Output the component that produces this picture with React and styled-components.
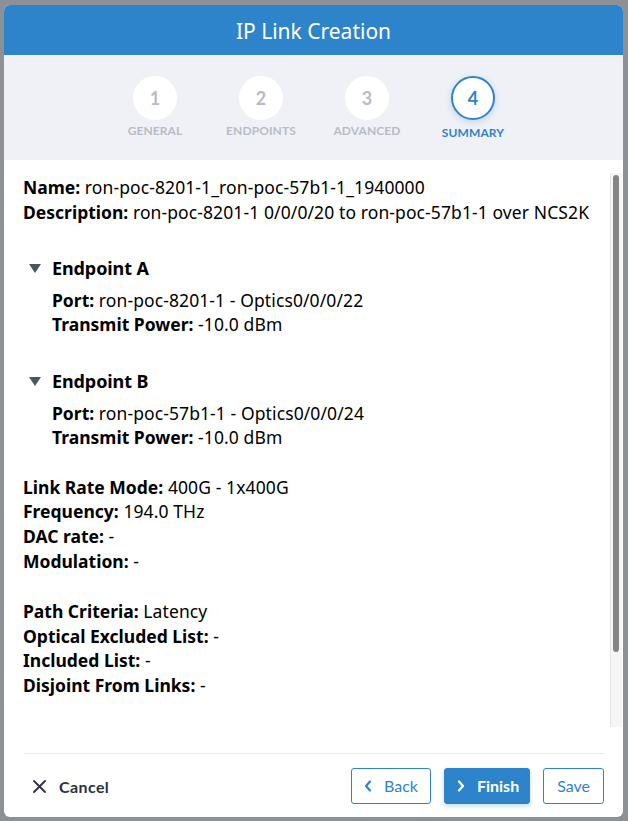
import React from "react";
import styled, { createGlobalStyle } from "styled-components";

const GlobalStyle = createGlobalStyle`
  html, body {
    margin: 0;
    padding: 0;
    background: #8d9095;
  }
  body {
    font-family: "Lato", "Open Sans", sans-serif;
  }
`;

const Page = styled.div`
  padding: 5px 5px 4px 4px;
  height: 821px;
  box-sizing: border-box;
`;

const Modal = styled.div`
  height: 100%;
  background: #ffffff;
  border-radius: 6px;
  overflow: hidden;
  display: flex;
  flex-direction: column;
`;

const Header = styled.div`
  height: 50px;
  background: #2e84cb;
  color: #ffffff;
  display: flex;
  align-items: center;
  justify-content: center;
  font-family: "Noto Sans", sans-serif;
  font-size: 21px;
  padding-top: 1px;
  box-sizing: border-box;
  flex-shrink: 0;
`;

const Stepper = styled.div`
  height: 105px;
  background: #eff1f6;
  display: flex;
  justify-content: center;
  padding-top: 21px;
  box-sizing: border-box;
  flex-shrink: 0;
  padding-left: 1px;
`;

const Step = styled.div`
  width: 106px;
  display: flex;
  flex-direction: column;
  align-items: center;
`;

const Circle = styled.div`
  width: 44px;
  height: 44px;
  border-radius: 50%;
  background: #ffffff;
  box-sizing: border-box;
  border: 2px solid ${(p) => (p.$active ? "#2e84cb" : "#ffffff")};
  box-shadow: ${(p) => (p.$active ? "0 2px 6px rgba(46,132,203,0.25)" : "none")};
  display: flex;
  align-items: center;
  justify-content: center;
  font-size: 18px;
  font-weight: 700;
  color: ${(p) => (p.$active ? "#2e84cb" : "#b9bcc7")};
`;

const StepLabel = styled.div`
  margin-top: ${(p) => (p.$active ? "5px" : "3px")};
  font-size: 12px;
  font-weight: 700;
  color: ${(p) => (p.$active ? "#2e84cb" : "#b9bcc7")};
  letter-spacing: 0.1px;
`;

const Body = styled.div`
  flex: 1;
  margin-top: 13px;
  min-height: 0;
  display: flex;
`;

const ScrollArea = styled.div`
  flex: 1;
  overflow: hidden;
  padding: 2px 0 0 19px;
  color: #000000;
  font-family: "Noto Sans", sans-serif;
  font-size: 17.5px;
  line-height: 24.6px;
  letter-spacing: 0.1px;
`;

const ScrollTrack = styled.div`
  width: 12px;
  background: #f6f6f6;
  border-left: 1px solid #e4e4e4;
  padding: 2px 3px 0 2px;
  box-sizing: border-box;
  margin-right: 1px;
`;

const ScrollThumb = styled.div`
  height: 477px;
  border-radius: 4px;
  background: #858585;
`;

const Line = styled.div`
  white-space: nowrap;
`;

const Key = styled.b`
  font-weight: 700;
  letter-spacing: 0;
`;

const Group = styled.div`
  margin-top: ${(p) => p.$gap || 0}px;
`;

const Section = styled.div`
  margin-top: 32px;
`;

const SectionTitle = styled.div`
  display: flex;
  align-items: center;
  font-size: 18px;
  font-weight: 700;
  letter-spacing: -0.1px;
  padding-left: 6px;
`;

const Caret = styled.span`
  width: 0;
  height: 0;
  border-left: 6px solid transparent;
  border-right: 6px solid transparent;
  border-top: 9px solid #4e5562;
  margin-right: 11px;
`;

const SectionBody = styled.div`
  padding-left: 29px;
  margin-top: 7px;
`;

const Footer = styled.div`
  margin: 26px 19px 0 20px;
  border-top: 1px solid #e8eaee;
  height: 63px;
  display: flex;
  align-items: center;
  flex-shrink: 0;
`;

const CancelButton = styled.button`
  background: none;
  border: none;
  display: flex;
  align-items: center;
  gap: 13px;
  font-family: inherit;
  font-size: 16px;
  font-weight: 700;
  color: #2b3240;
  padding: 0 0 0 9px;
  cursor: pointer;
  margin-top: 2px;
  letter-spacing: 0.4px;
`;

const Actions = styled.div`
  margin-left: auto;
  display: flex;
  gap: 13px;
`;

const Button = styled.button`
  height: 36px;
  box-sizing: border-box;
  border-radius: 3px;
  border: 1px solid #2e84cb;
  background: ${(p) => (p.$primary ? "#2e84cb" : "#ffffff")};
  color: ${(p) => (p.$primary ? "#ffffff" : "#2e84cb")};
  box-shadow: ${(p) => (p.$primary ? "0 2px 5px rgba(46,132,203,0.3)" : "none")};
  font-family: inherit;
  font-size: 16px;
  font-weight: ${(p) => (p.$primary ? 700 : 400)};
  padding: 0 ${(p) => p.$pr || 14}px 0 ${(p) => p.$pl || 14}px;
  display: flex;
  align-items: center;
  gap: 12px;
  cursor: pointer;
`;

const Chevron = ({ dir }) => (
  <svg width="8" height="12" viewBox="0 0 8 12">
    <path
      d={dir === "left" ? "M6 1.5 L2 6 L6 10.5" : "M2 1.5 L6 6 L2 10.5"}
      fill="none"
      stroke="currentColor"
      strokeWidth="2.2"
      strokeLinecap="round"
      strokeLinejoin="round"
    />
  </svg>
);

const CloseIcon = () => (
  <svg width="13" height="13" viewBox="0 0 13 13">
    <path d="M1 1 L12 12 M12 1 L1 12" stroke="#2b3240" strokeWidth="1.8" strokeLinecap="round" />
  </svg>
);

const steps = ["GENERAL", "ENDPOINTS", "ADVANCED", "SUMMARY"];

const Field = ({ k, v }) => (
  <Line>
    <Key>{k}:</Key> {v}
  </Line>
);

const Endpoint = ({ title, port }) => (
  <Section>
    <SectionTitle>
      <Caret />
      {title}
    </SectionTitle>
    <SectionBody>
      <Field k="Port" v={port} />
      <Field k="Transmit Power" v="-10.0 dBm" />
    </SectionBody>
  </Section>
);

export default function App() {
  return (
    <>
      <GlobalStyle />
      <Page>
        <Modal>
          <Header>IP Link Creation</Header>
          <Stepper>
            {steps.map((s, i) => (
              <Step key={s}>
                <Circle $active={i === 3}>{i + 1}</Circle>
                <StepLabel $active={i === 3}>{s}</StepLabel>
              </Step>
            ))}
          </Stepper>
          <Body>
            <ScrollArea>
              <Field k="Name" v="ron-poc-8201-1_ron-poc-57b1-1_1940000" />
              <Field k="Description" v="ron-poc-8201-1 0/0/0/20 to ron-poc-57b1-1 over NCS2K" />
              <Endpoint title="Endpoint A" port="ron-poc-8201-1 - Optics0/0/0/22" />
              <Endpoint title="Endpoint B" port="ron-poc-57b1-1 - Optics0/0/0/24" />
              <Group $gap={25}>
                <Field k="Link Rate Mode" v="400G - 1x400G" />
                <Field k="Frequency" v="194.0 THz" />
                <Field k="DAC rate" v="-" />
                <Field k="Modulation" v="-" />
              </Group>
              <Group $gap={26}>
                <Field k="Path Criteria" v="Latency" />
                <Field k="Optical Excluded List" v="-" />
                <Field k="Included List" v="-" />
                <Field k="Disjoint From Links" v="-" />
              </Group>
            </ScrollArea>
            <ScrollTrack>
              <ScrollThumb />
            </ScrollTrack>
          </Body>
          <Footer>
            <CancelButton>
              <CloseIcon />
              Cancel
            </CancelButton>
            <Actions>
              <Button $pl={12} $pr={12}>
                <Chevron dir="left" />
                Back
              </Button>
              <Button $primary $pl={12} $pr={10}>
                <Chevron dir="right" />
                Finish
              </Button>
              <Button $pl={13} $pr={13}>Save</Button>
            </Actions>
          </Footer>
        </Modal>
      </Page>
    </>
  );
}
